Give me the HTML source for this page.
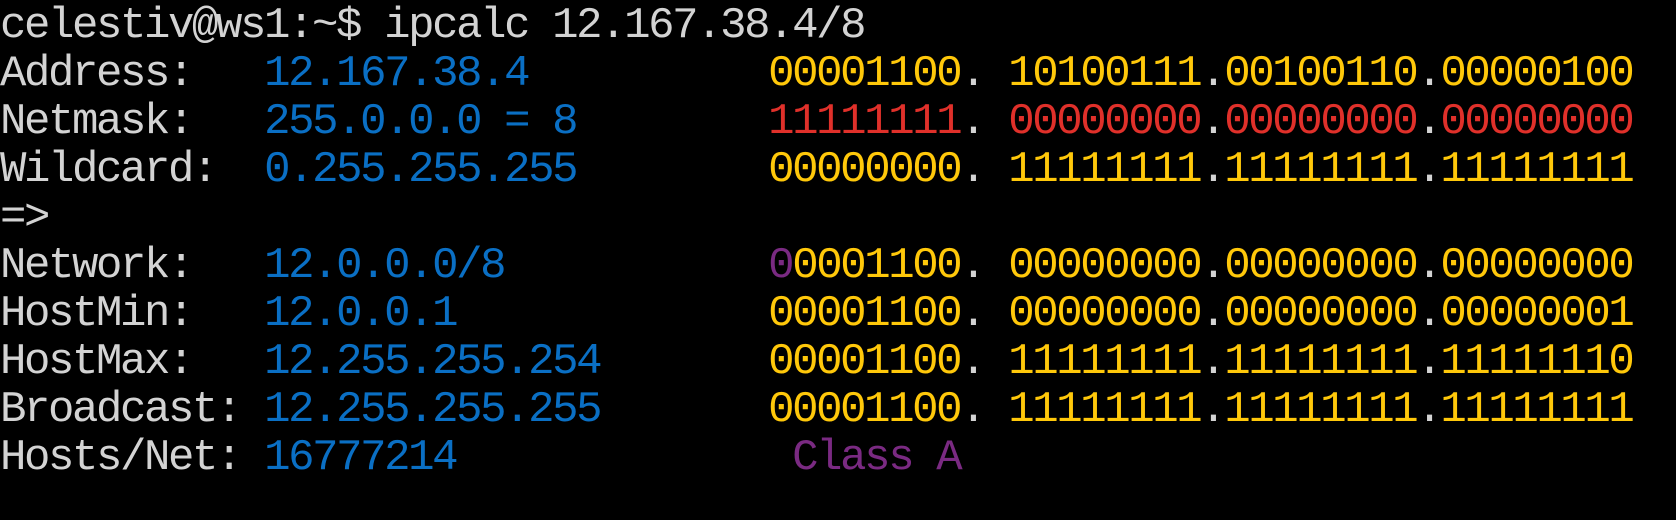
<!DOCTYPE html>
<html><head><meta charset="utf-8"><style>
html,body{margin:0;padding:0;background:#000;width:1676px;height:520px;overflow:hidden}
pre{margin:0;padding-top:2px;font-family:"Liberation Mono",monospace;font-size:44px;letter-spacing:-2.4px;line-height:48px;color:#d3d3d3;white-space:pre}
.b{color:#0a6fc4}.y{color:#ffc80a}.r{color:#e0302a}.p{color:#7a2a82}.w{color:#d3d3d3}
</style></head><body><pre>celestiv@ws1:~$ ipcalc 12.167.38.4/8
Address:   <span class="b">12.167.38.4</span>          <span class="y">00001100</span>. <span class="y">10100111</span>.<span class="y">00100110</span>.<span class="y">00000100</span>
Netmask:   <span class="b">255.0.0.0 = 8</span>        <span class="r">11111111</span>. <span class="r">00000000</span>.<span class="r">00000000</span>.<span class="r">00000000</span>
Wildcard:  <span class="b">0.255.255.255</span>        <span class="y">00000000</span>. <span class="y">11111111</span>.<span class="y">11111111</span>.<span class="y">11111111</span>
=&gt;
Network:   <span class="b">12.0.0.0/8</span>           <span class="p">0</span><span class="y">0001100</span>. <span class="y">00000000</span>.<span class="y">00000000</span>.<span class="y">00000000</span>
HostMin:   <span class="b">12.0.0.1</span>             <span class="y">00001100</span>. <span class="y">00000000</span>.<span class="y">00000000</span>.<span class="y">00000001</span>
HostMax:   <span class="b">12.255.255.254</span>       <span class="y">00001100</span>. <span class="y">11111111</span>.<span class="y">11111111</span>.<span class="y">11111110</span>
Broadcast: <span class="b">12.255.255.255</span>       <span class="y">00001100</span>. <span class="y">11111111</span>.<span class="y">11111111</span>.<span class="y">11111111</span>
Hosts/Net: <span class="b">16777214</span>              <span class="p">Class A</span></pre></body></html>
